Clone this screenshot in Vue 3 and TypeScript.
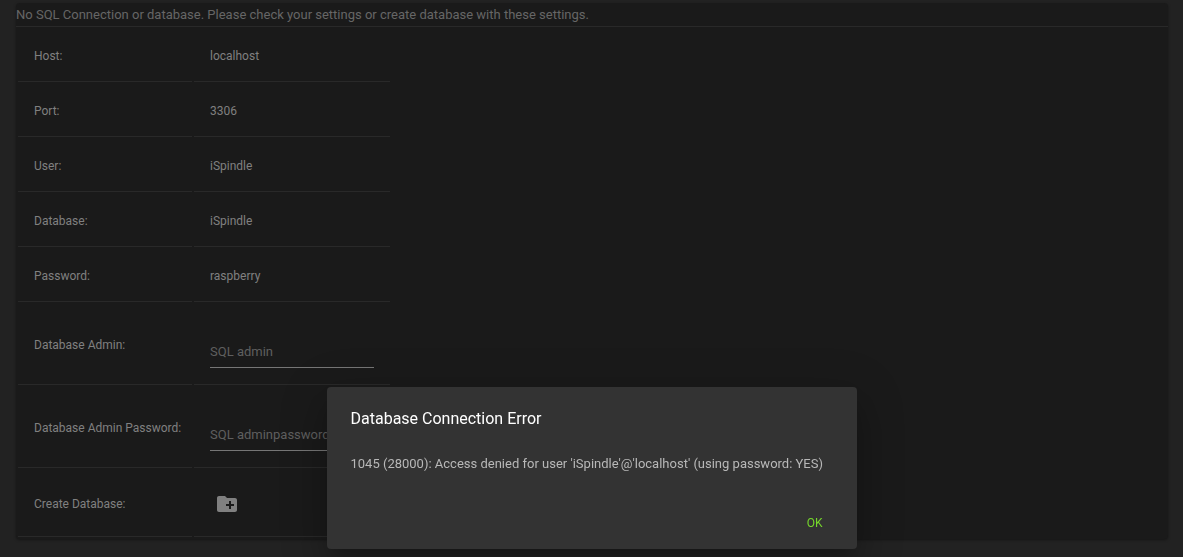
<script setup lang="ts">
import { ref } from 'vue'

interface Setting {
  label: string
  value: string
}

const settings: Setting[] = [
  { label: 'Host:', value: 'localhost' },
  { label: 'Port:', value: '3306' },
  { label: 'User:', value: 'iSpindle' },
  { label: 'Database:', value: 'iSpindle' },
  { label: 'Password:', value: 'raspberry' },
]

const admin = ref('')
const adminPassword = ref('')
const dialogOpen = ref(true)
</script>

<template>
  <main class="page">
    <section class="card">
      <header class="notice">
        No SQL Connection or database. Please check your settings or create database with these settings.
      </header>
      <table class="settings">
        <tbody>
          <tr v-for="item in settings" :key="item.label">
            <th scope="row">{{ item.label }}</th>
            <td>{{ item.value }}</td>
          </tr>
          <tr class="field-row">
            <th scope="row"><label for="admin">Database Admin:</label></th>
            <td><input id="admin" v-model="admin" class="field" type="text" placeholder="SQL admin" /></td>
          </tr>
          <tr class="field-row">
            <th scope="row"><label for="admin-password">Database Admin Password:</label></th>
            <td>
              <input id="admin-password" v-model="adminPassword" class="field" type="text" placeholder="SQL adminpassword" />
            </td>
          </tr>
          <tr class="action-row">
            <th scope="row">Create Database:</th>
            <td>
              <button class="create" type="button" aria-label="Create Database" @click="dialogOpen = true">
                <svg viewBox="0 0 24 24" width="24" height="24" aria-hidden="true">
                  <path
                    fill="currentColor"
                    d="M20 6h-8l-2-2H4c-1.11 0-1.99.89-1.99 2L2 18c0 1.11.89 2 2 2h16c1.11 0 2-.89 2-2V8c0-1.11-.89-2-2-2zm-1 8h-3v3h-2v-3h-3v-2h3V9h2v3h3v2z"
                  />
                </svg>
              </button>
            </td>
          </tr>
        </tbody>
      </table>
    </section>

    <div v-if="dialogOpen" class="overlay">
      <div class="dialog" role="alertdialog" aria-modal="true" aria-labelledby="dialog-title" aria-describedby="dialog-text">
        <h2 id="dialog-title">Database Connection Error</h2>
        <p id="dialog-text">1045 (28000): Access denied for user 'iSpindle'@'localhost' (using password: YES)</p>
        <div class="actions">
          <button class="ok" type="button" @click="dialogOpen = false">OK</button>
        </div>
      </div>
    </div>
  </main>
</template>

<style>
body {
  background: #222222;
}
</style>

<style scoped>
.page {
  box-sizing: border-box;
  min-height: 100vh;
  padding: 3px 15px 16px 16px;
  background: #222222;
  color: #808080;
  font-family: Roboto, Lato, sans-serif;
  font-size: 12px;
}

.card {
  background: #1a1a1a;
  border-radius: 4px;
  box-shadow: 0 1px 3px rgba(0, 0, 0, 0.4);
}

.notice {
  height: 23px;
  border-bottom: 1px solid #292929;
  color: #666666;
  font-size: 13px;
  line-height: 24px;
  white-space: nowrap;
}

.settings {
  border-collapse: separate;
  border-spacing: 2px;
}

.settings th,
.settings td {
  box-sizing: border-box;
  height: 53px;
  padding: 1px 16px 0;
  border-bottom: 1px solid #292929;
  font-weight: 400;
  text-align: left;
  white-space: nowrap;
}

.settings th {
  width: 174px;
  padding-right: 0;
}

.settings td {
  width: 196px;
}

.settings .field-row th,
.settings .field-row td {
  height: 81px;
}

.settings .action-row th,
.settings .action-row td {
  height: 67px;
}

.field {
  box-sizing: border-box;
  display: block;
  width: 164px;
  height: 32px;
  margin-top: 15px;
  padding: 0;
  border: 0;
  border-bottom: 1px solid #767676;
  outline: 0;
  background: transparent;
  color: #808080;
  font-family: inherit;
  font-size: 13px;
}

.field::placeholder {
  color: #5f5f5f;
  opacity: 1;
}

.create {
  display: block;
  padding: 5px;
  border: 0;
  background: transparent;
  color: #808080;
  cursor: pointer;
}

.create svg {
  display: block;
}

.overlay {
  position: fixed;
  inset: 0;
  display: flex;
  align-items: flex-end;
  justify-content: center;
  padding-bottom: 8px;
}

.dialog {
  box-sizing: border-box;
  width: 530px;
  max-width: 100%;
  padding: 16px 24px 8px;
  border-radius: 4px;
  background: #333333;
  box-shadow:
    0 11px 15px -7px rgba(0, 0, 0, 0.2),
    0 24px 38px 3px rgba(0, 0, 0, 0.14),
    0 9px 46px 8px rgba(0, 0, 0, 0.12);
}

.dialog h2 {
  margin: 0;
  color: #ffffff;
  font-size: 16px;
  font-weight: 400;
  line-height: 32px;
}

.dialog p {
  margin: 16px 0 0;
  color: #b8b8b8;
  font-size: 13px;
  line-height: 26px;
}

.actions {
  display: flex;
  justify-content: flex-end;
  margin-top: 28px;
}

.ok {
  height: 36px;
  padding: 0 10px;
  border: 0;
  background: transparent;
  color: #76d72c;
  font-family: inherit;
  font-size: 12px;
  cursor: pointer;
}
</style>
